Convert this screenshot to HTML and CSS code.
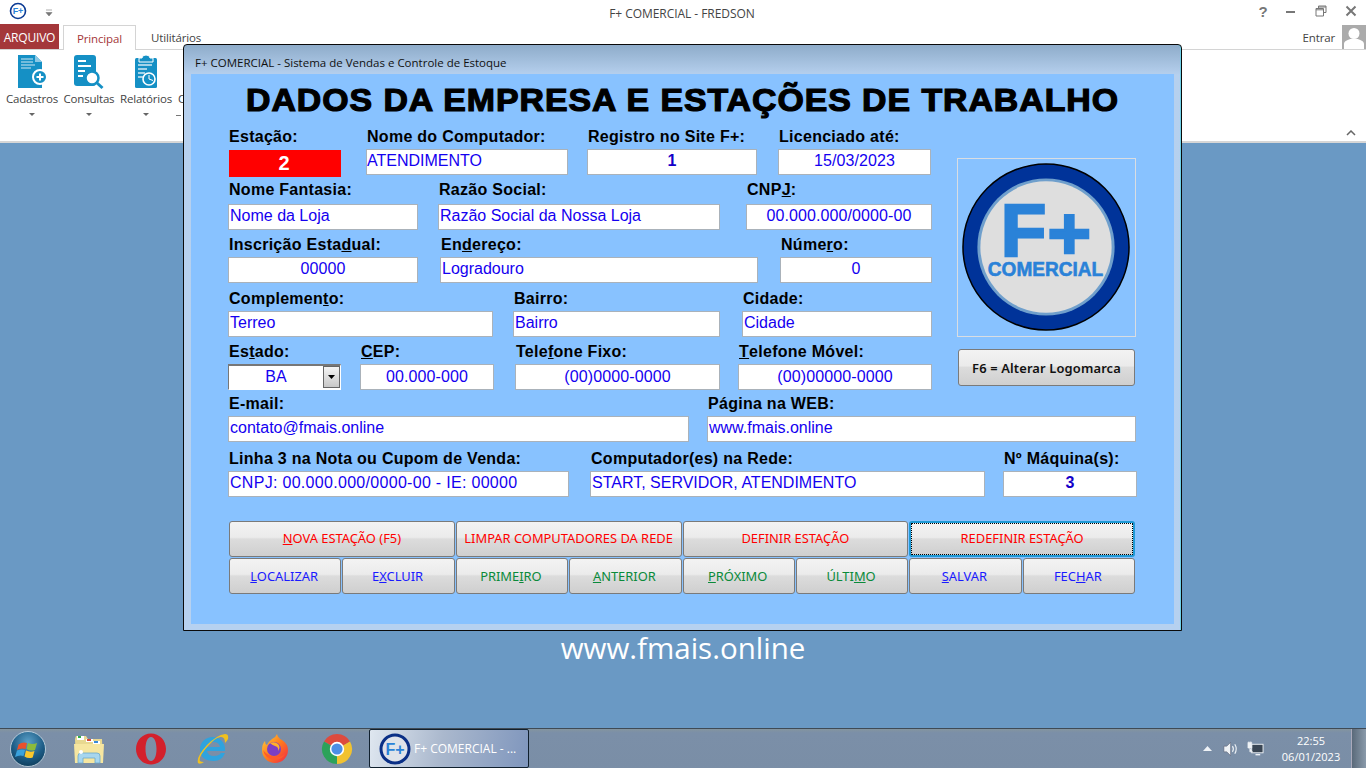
FILE: index.html
```html
<!DOCTYPE html>
<html lang="pt-BR">
<head>
<meta charset="utf-8">
<title>F+ COMERCIAL - FREDSON</title>
<link rel="stylesheet" href="styles.css">
</head>
<body>
<div class="app">
  <header class="titlebar">
    <div class="qat">
      <svg class="qat-logo" viewBox="-9 -9 18 18"><circle r="7.5" fill="#fff" stroke="#0b3a94" stroke-width="1.6"/><text x="0" y="3.4" text-anchor="middle" class="mini-f">F+</text></svg>
      <svg class="qat-arrow" viewBox="0 0 8 8"><path d="M1 1h6M1 3.5h6L4 7z" fill="#777" stroke="#777" stroke-width=".6"/></svg>
    </div>
    <div class="app-title">F+ COMERCIAL - FREDSON</div>
    <div class="winctl">
      <span class="help">?</span>
      <svg viewBox="0 0 12 12"><path d="M1 7h9" stroke="#777" stroke-width="2"/></svg>
      <svg viewBox="0 0 12 12"><path d="M3.5 3V1h7.500v6.500H8.500M1 3.500h7.500V11H1zM1 4.800h7.500M3.500 2h7.500" fill="none" stroke="#777"/></svg>
      <svg viewBox="0 0 12 12"><path d="M1.500 1.500l9 9M10.500 1.500l-9 9" stroke="#777" stroke-width="2"/></svg>
    </div>
  </header>

  <nav class="tabs">
    <div class="tab-file">ARQUIVO</div>
    <div class="tab-active">Principal</div>
    <div class="tab">Utilitários</div>
    <div class="account">
      <span>Entrar</span>
      <svg class="avatar" viewBox="0 0 24 24"><rect width="24" height="24" fill="#ababab"/><circle cx="12" cy="8.500" r="5.500" fill="#fff"/><path d="M2 24v-5c0-3 4-4 6-5h8c2 1 6 2 6 5v5z" fill="#fff"/></svg>
    </div>
  </nav>

  <section class="ribbon">
    <div class="rb-item">
      <svg class="rb-icon" viewBox="2 0 48 36"><path d="M12 0h17l7 7v26H12z" fill="#1590c5"/><path d="M29 0v7h7z" fill="#8cc8e4"/><path d="M15 4h12M15 7h12M15 10h14M15 13h10" stroke="#cfe8f4" stroke-width="1.200"/><circle cx="34" cy="22" r="7" fill="#1590c5" stroke="#fff" stroke-width="2"/><path d="M30.500 22h7M34 18.500v7" stroke="#fff" stroke-width="2"/></svg>
      <span class="rb-label">Cadastros</span><span class="rb-caret"></span>
    </div>
    <div class="rb-item">
      <svg class="rb-icon" viewBox="2 0 48 36"><rect x="11" y="0" width="22" height="31" rx="3" fill="#1590c5"/><path d="M15 6h8M15 11h13M15 16h7M15 21h5" stroke="#fff" stroke-width="2"/><circle cx="29" cy="23" r="6.500" fill="#fff" stroke="#1590c5" stroke-width="2.500"/><path d="M33.500 27.500l6 5.500" stroke="#1590c5" stroke-width="3"/></svg>
      <span class="rb-label">Consultas</span><span class="rb-caret"></span>
    </div>
    <div class="rb-item">
      <svg class="rb-icon" viewBox="0 0 48 36"><rect x="13" y="3" width="22" height="30" rx="1.500" fill="#1590c5"/><path d="M20 3a4 3 0 0 1 8 0h3v4H17V3z" fill="#1590c5" stroke="#fff"/><path d="M16 10h14M16 14h9M16 18h7M16 22h5" stroke="#cfe8f4" stroke-width="1.300"/><circle cx="27" cy="24" r="6" fill="#1590c5" stroke="#fff" stroke-width="1.600"/><path d="M27 20v4l4 1.500" fill="none" stroke="#fff"/></svg>
      <span class="rb-label">Relatórios</span><span class="rb-caret"></span>
    </div>
    <div class="rb-item rb-hidden">
      <span class="rb-label">Caixa</span>
    </div>
    <svg class="rb-collapse" viewBox="0 0 10 6"><path d="M1 5l4-4 4 4" fill="none" stroke="#666" stroke-width="1.500"/></svg>
  </section>

  <main class="desktop">
    <div class="site">www.fmais.online</div>
  </main>

  <footer class="taskbar">
    <svg class="orb" viewBox="-18 -18 36 36">
      <defs>
        <radialGradient id="orbg" cx="50%" cy="30%" r="75%"><stop offset="0" stop-color="#5aa0c8"/><stop offset=".6" stop-color="#1d5c86"/><stop offset="1" stop-color="#0e3a56"/></radialGradient>
      </defs>
      <circle r="17.500" fill="url(#orbg)" stroke="#cfe0ea" stroke-width=".8"/>
      <path d="M-9.500 -4.500q4 -3 8.500 -1.500l-1.500 6q-4 -1.500 -8.500 1z" fill="#e9512b"/>
      <path d="M0 -6q4.500 2 9 0l-2 7q-4.500 1.500 -8.500 -1z" fill="#8cbb3c"/>
      <path d="M-11 1.500q4 -1.500 8 -.5l-1.500 6q-4 -1.500 -8.500 1z" fill="#3aa2dc"/>
      <path d="M-2 1.500q4 2 8.500 .5l-1.800 6.500q-4.500 1.500 -8.200 -1z" fill="#fbc72c"/>
    </svg>
    <svg class="tb-icon" viewBox="0 0 32 32">
      <path d="M2 6l1-3h10l2 3h14l1 24H3z" fill="#e8d890"/>
      <path d="M4 3h7v4H4z" fill="#fff"/><path d="M5 3h3v2H5z" fill="#2fb04a"/><path d="M13 6h7v3h-7z" fill="#fff"/><path d="M14 6h4v2h-4z" fill="#d94a3a"/><path d="M20 8h7v3h-7z" fill="#fff"/><path d="M21 8h4v2h-4z" fill="#3a8ad9"/>
      <path d="M1 11h30l-1 19H2z" fill="#f6e6a0"/>
      <path d="M5 30v-7q0-3 3-3h16q3 0 3 3v7h-5v-5H10v5z" fill="#a7d6ee" stroke="#6aa8cc" stroke-width=".8"/>
      <circle cx="8" cy="19" r="2" fill="#fff"/>
    </svg>
    <svg class="tb-icon" viewBox="0 0 32 32"><path fill-rule="evenodd" d="M16 .5C24.500 .5 31 7.500 31 16s-6.500 15.500-15 15.500S1 24.500 1 16 7.500 .5 16 .5zM16 4c-3.500 0-5.500 5.500-5.500 12S12.500 28 16 28s5.500-5.500 5.500-12S19.500 4 16 4z" fill="#d3202c"/></svg>
    <svg class="tb-icon" viewBox="0 0 32 32"><path d="M3 16a12.500 12 0 0 1 25 0v2H10q1 5 7 5 5 0 7-3h4q-3 8-11 8Q3 28 3 16zm7-2h13q-1-5-6.500-5T10 14z" fill="#2fa3de"/><path d="M1 30q-2-6 9-18Q20 2 28 1q4 0 3 5-1 2-3 4 0-7-5-6-5 1-12 9Q1 24 3 28q1 1 4 1-4 3-6 1z" fill="#f0c020"/></svg>
    <svg class="tb-icon" viewBox="0 0 32 32"><defs><linearGradient id="ffg" x1="0" y1="0" x2="1" y2="1"><stop offset="0" stop-color="#ffd23c"/><stop offset=".5" stop-color="#ff7a1c"/><stop offset="1" stop-color="#f0264a"/></linearGradient></defs><path d="M18 1q1 4 5 6 6 4 6 10a13 13 0 0 1-26 0q0-6 3-9 0 3 2 4 1-3 5-6 4-2 5-5z" fill="url(#ffg)"/><circle cx="15" cy="16" r="7" fill="#7b3fc4"/><path d="M11 10q5-2 8 1 3 3 0 7 1-4-3-5-3-1-5-3z" fill="#ffb02c"/><path d="M4 17q2 9 12 10 7 0 11-7-3 4-9 4-9 0-14-7z" fill="#ff5a2c"/></svg>
    <svg class="tb-icon" viewBox="-16 -16 32 32"><path d="M0 0L-13 -7.500A15 15 0 0 1 13 -7.500z" fill="#dd4b3e"/><path d="M0 0L13 -7.500A15 15 0 0 1 0 15z" fill="#f2c230"/><path d="M0 0L0 15A15 15 0 0 1 -13 -7.500z" fill="#2ca25a"/><circle r="7.200" fill="#fff"/><circle r="5.600" fill="#4d8fe6"/></svg>
    <div class="task">
      <svg class="task-logo" viewBox="-16 -16 32 32"><circle r="14" fill="#dfe3ea" stroke="#0a2f86" stroke-width="3"/><text x="0" y="6" text-anchor="middle" class="task-f">F+</text></svg>
      <span>F+ COMERCIAL - ...</span>
    </div>
    <div class="tray">
      <svg class="tray-up" viewBox="0 0 9 5"><path d="M0 5l4.500-5L9 5z" fill="#eef2f6"/></svg>
      <svg class="tray-ic" viewBox="0 0 18 16"><path d="M1 5h3l4-4v14l-4-4H1z" fill="#eef2f6" stroke="#556" stroke-width=".5"/><path d="M10 5q2 3 0 6M12.500 3q3 5 0 10" fill="none" stroke="#eef2f6" stroke-width="1.200"/></svg>
      <svg class="tray-ic" viewBox="0 0 18 16"><rect x="5" y="3" width="12" height="9" fill="#3a4654" stroke="#eef2f6"/><path d="M9 14h5" stroke="#eef2f6" stroke-width="1.500"/><path d="M1 1h4v6H1zM2 0v2M4 0v2M3 7v4h3" fill="#eef2f6" stroke="#eef2f6" stroke-width=".7"/></svg>
      <div class="clock"><span>22:55</span><span>06/01/2023</span></div>
    </div>
    <div class="show-desktop"></div>
  </footer>

  <div class="dialog">
    <div class="dlg-title">F+ COMERCIAL - Sistema de Vendas e Controle de Estoque</div>
    <form class="client">
      <h1 class="heading">DADOS DA EMPRESA E ESTAÇÕES DE TRABALHO</h1>
      <div class="upper">
        <div class="fields">
          <div class="row r1">
            <div class="w113"><label>Estação:</label><div class="station">2</div></div>
            <div class="w202 ml25"><label>Nome do Computador:</label><div class="input flush">ATENDIMENTO</div></div>
            <div class="w170 ml19"><label>Registro no Site F+:</label><div class="input strong">1</div></div>
            <div class="w153 ml21"><label>Licenciado até:</label><div class="input center">15/03/2023</div></div>
          </div>
          <div class="row r2">
            <div class="w190"><label>Nome Fantasia:</label><div class="input">Nome da Loja</div></div>
            <div class="w282 ml20"><label>Razão Social:</label><div class="input">Razão Social da Nossa Loja</div></div>
            <div class="w186 ml26"><label>CNP<u>J</u>:</label><div class="input center">00.000.000/0000-00</div></div>
          </div>
          <div class="row r3">
            <div class="w190"><label>Inscrição Esta<u>d</u>ual:</label><div class="input center">00000</div></div>
            <div class="w318 ml22"><label>En<u>d</u>ereço:</label><div class="input">Logradouro</div></div>
            <div class="w152 ml22"><label>Núme<u>r</u>o:</label><div class="input center">0</div></div>
          </div>
          <div class="row r4">
            <div class="w265"><label>Complemen<u>t</u>o:</label><div class="input">Terreo</div></div>
            <div class="w207 ml20"><label>Bairro:</label><div class="input">Bairro</div></div>
            <div class="w190 ml22"><label>Cidade:</label><div class="input">Cidade</div></div>
          </div>
          <div class="row r5">
            <div class="w113"><label>Es<u>t</u>ado:</label>
              <div class="combo"><span>BA</span><span class="drop"><svg viewBox="0 0 7 4"><path d="M0 0h7L3.500 4z" fill="#000"/></svg></span></div>
            </div>
            <div class="w134 ml19"><label><u>C</u>EP:</label><div class="input center">00.000-000</div></div>
            <div class="w205 ml21"><label>Tele<u>f</u>one Fixo:</label><div class="input center">(00)0000-0000</div></div>
            <div class="w194 ml18"><label><u>T</u>elefone Móvel:</label><div class="input center">(00)00000-0000</div></div>
          </div>
        </div>
        <aside class="logo-col">
          <div class="logo-box">
            <svg viewBox="0 0 178 178">
              <circle cx="88.500" cy="88.500" r="83.500" fill="#003399" stroke="#000" stroke-width="1.500"/>
              <circle cx="88.500" cy="88.500" r="69" fill="#6f9fcc"/>
              <circle cx="88.500" cy="88.500" r="66" fill="#dedede"/>
              <text x="43" y="98" class="logo-f">F</text>
              <text x="90" y="101" class="logo-plus">+</text>
              <text x="30" y="118" class="logo-c" textLength="116" lengthAdjust="spacingAndGlyphs">COMERCIAL</text>
            </svg>
          </div>
          <button type="button" class="btn logo-btn">F6 = Alterar Logomarca</button>
        </aside>
      </div>
      <div class="row r6">
        <div class="w461"><label>E-mail:</label><div class="input">contato@fmais.online</div></div>
        <div class="w429 ml18"><label>Página na WEB:</label><div class="input">www.fmais.online</div></div>
      </div>
      <div class="row r7">
        <div class="w341"><label>Linha 3 na Nota ou Cupom de Venda:</label><div class="input spaced">CNPJ: 00.000.000/0000-00 - IE: 00000</div></div>
        <div class="w395 ml21"><label>Computador(es) na Rede:</label><div class="input">START, SERVIDOR, ATENDIMENTO</div></div>
        <div class="w134 ml18"><label>Nº Máquina(s):</label><div class="input strong">3</div></div>
      </div>
      <div class="actions">
        <button type="button" class="btn wide red"><u>N</u>OVA ESTAÇÃO (F5)</button>
        <button type="button" class="btn wide red">LIMPAR COMPUTADORES DA REDE</button>
        <button type="button" class="btn wide red">DEFINIR ESTAÇÃO</button>
        <button type="button" class="btn wide red focused">REDEFINIR ESTAÇÃO</button>
        <button type="button" class="btn small blue"><u>L</u>OCALIZAR</button>
        <button type="button" class="btn small blue">E<u>X</u>CLUIR</button>
        <button type="button" class="btn small green">PRIME<u>I</u>RO</button>
        <button type="button" class="btn small green"><u>A</u>NTERIOR</button>
        <button type="button" class="btn small green"><u>P</u>RÓXIMO</button>
        <button type="button" class="btn small green">ÚLTI<u>M</u>O</button>
        <button type="button" class="btn small blue"><u>S</u>ALVAR</button>
        <button type="button" class="btn small blue">FEC<u>H</u>AR</button>
      </div>
    </form>
  </div>
</div>
</body>
</html>
```

FILE: styles.css
```css
* { box-sizing: border-box; }
html, body { margin: 0; padding: 0; }
body { width: 1366px; height: 768px; overflow: hidden; font-family: "Open Sans", "Noto Sans", sans-serif; }
.app { position: relative; width: 1366px; height: 768px; display: flex; flex-direction: column; background: #fff; }

/* title bar */
.titlebar { height: 25px; flex: none; display: flex; align-items: center; background: #fff; }
.qat { flex: 1; display: flex; align-items: center; padding-left: 9px; gap: 18px; }
.qat-logo { width: 18px; height: 18px; margin-top: -3px; }
.mini-f { font: bold 9px "Liberation Sans", sans-serif; fill: #2a82d8; }
.qat-arrow { width: 8px; height: 8px; }
.app-title { font-size: 12px; color: #444; margin: 1px 2px 0 0; letter-spacing: -.05px; }
.winctl { flex: 1; display: flex; justify-content: flex-end; align-items: center; gap: 18px; padding-right: 9px; margin-top: -3px; }
.winctl svg { width: 12px; height: 12px; }
.help { font: bold 15px "Liberation Sans", sans-serif; color: #777; width: 12px; margin-right: -2px; text-align: center; }

/* tabs */
.tabs { height: 25px; flex: none; display: flex; align-items: flex-end; border-bottom: 1px solid #d4d4d4; font-size: 11.500px; letter-spacing: -.15px; }
.tab-file { width: 59px; height: 25px; background: #a4373a; color: #fff; display: flex; align-items: center; justify-content: center; font-size: 12px; letter-spacing: -.2px; padding-top: 1px; }
.tab-active { width: 73px; height: 25px; margin-left: 4px; margin-bottom: -1px; border: 1px solid #d4d4d4; border-bottom: 0; background: #fff; color: #a4373a; display: flex; align-items: center; justify-content: center; }
.tab { margin-left: 15px; height: 24px; display: flex; align-items: center; color: #444; }
.account { margin-left: auto; display: flex; align-items: center; gap: 7px; height: 24px; color: #444; }
.avatar { width: 24px; height: 24px; display: block; }

/* ribbon */
.ribbon { height: 93px; flex: none; display: flex; padding: 5px 0 0 6px; gap: 5px; background: #fff; border-bottom: 2px solid #d6d6d6; position: relative; }
.rb-item { width: 52px; display: flex; flex-direction: column; align-items: center; font-size: 11.500px; letter-spacing: -.2px; color: #444; }
.rb-icon { width: 48px; height: 36px; display: block; }
.rb-label { white-space: nowrap; line-height: 16px; }
.rb-caret { margin-top: 6px; width: 0; height: 0; border: 3px solid transparent; border-top: 3px solid #666; border-bottom: 0; border-left-width: 3.5px; border-right-width: 3.5px; }
.rb-hidden { padding-top: 36px; margin-left: -1px; align-items: flex-start; padding-left: 2px; }
.rb-hidden::after { content: ""; display: block; width: 5px; height: 1px; margin: 8px 0 0 -2px; background: #777; }
.rb-collapse { width: 10px; height: 6px; position: absolute; right: 10px; bottom: 5px; }

/* desktop */
.desktop { flex: 1; background: #6a99c4; display: flex; align-items: flex-end; justify-content: center; padding-bottom: 61px; }
.site { color: #fff; font-size: 29.500px; line-height: 38px; }

/* taskbar */
.taskbar { height: 40px; flex: none; display: flex; align-items: center; background: linear-gradient(#84959f 0, #7b8fa8 10%, #7a8ea6 100%); border-top: 1px solid #3f4a55; color: #fff; }
.orb { width: 36px; height: 36px; margin-left: 10px; flex: none; }
.tb-icon { width: 32px; height: 32px; margin-left: 30px; flex: none; }
.orb + .tb-icon { margin-left: 27px; }
.task { margin-left: 16px; width: 160px; height: 39px; display: flex; align-items: center; gap: 3px; padding-left: 9px; border: 1px solid #10202e; border-radius: 2px; background: linear-gradient(100deg, #dfe7f0 0, #aab8cd 45%, #7f96bd 100%); font-size: 12px; color: #fff; white-space: nowrap; flex: none; }
.task-logo { width: 32px; height: 32px; flex: none; }
.task-f { font: bold 16px "Liberation Sans", sans-serif; fill: #2a82d8; }
.tray { margin-left: auto; display: flex; align-items: center; }
.tray-up { width: 9px; height: 5px; margin-right: 11px; }
.tray-ic { width: 17px; height: 16px; margin-right: 7px; }
.clock { width: 80px; display: flex; flex-direction: column; align-items: center; font-size: 11px; line-height: 16px; }
.show-desktop { width: 15px; height: 39px; background: linear-gradient(90deg, #5a6a7a, #8a9aaa); border-left: 1px solid #aab; }

/* dialog window */
.dialog { position: absolute; left: 183px; top: 44px; width: 999px; height: 587px; padding: 0 7px 6px 7px; border: 1px solid #0a0a0a; border-radius: 4px 4px 0 0; background: linear-gradient(#8eacca 0, #b6d0ee 30px, #b6d1f0 100%); display: flex; flex-direction: column; box-shadow: inset -1px 0 0 #6fd0e8; }
.dlg-title { height: 29px; flex: none; font-size: 11.500px; color: #111; padding: 10px 0 0 4px; line-height: 15px; white-space: nowrap; }
.client { flex: 1; background: #88c2ff; padding: 0 37px; min-height: 0; }
.heading { margin: 8px 0 0; font: bold 32px/36px "Liberation Sans", sans-serif; text-align: center; color: #000; -webkit-text-stroke: 1.2px #000; letter-spacing: .9px; white-space: nowrap; transform: scaleX(1.058); }

/* form */
.upper { display: flex; margin-top: 7px; }
.fields { width: 704px; flex: none; }
.logo-col { margin-left: 25px; margin-top: 33px; width: 179px; flex: none; }
.logo-box { width: 179px; height: 179px; border: 1px solid #d9dde2; }
.logo-box svg { display: block; width: 177px; height: 177px; }
.logo-f { font: bold 75px "Liberation Sans", sans-serif; fill: #2a82d8; stroke: #2a82d8; stroke-width: 2.5px; }
.logo-plus { font: bold 75px "Liberation Sans", sans-serif; fill: #2a82d8; stroke: #2a82d8; stroke-width: 2.5px; }
.logo-c { font: bold 20px "Liberation Sans", sans-serif; fill: #2a82d8; stroke: #2a82d8; stroke-width: .6px; }
.logo-btn { display: block; width: 177px; height: 37px; margin: 12px 0 0 1px; padding-bottom: 5px; font-size: 12px; letter-spacing: .15px; font-weight: 600; color: #111; }

.row { display: flex; align-items: flex-start; }
.row label { display: flex; align-items: center; height: 24px; padding-left: 1px; white-space: pre; font: bold 16px "Liberation Sans", sans-serif; letter-spacing: .28px; color: #000; }
.row label u { text-underline-offset: 1px; }
.r1 { height: 50px; }
.r2 { margin-top: 1px; }
.r2 label { height: 28px; }
.r3 { margin-top: 3px; }
.r4 { margin-top: 4px; }
.r5 { margin-top: 1px; }
.r5 label, .r6 label, .r7 label { height: 26px; padding-top: 2px; }
.r5 .input { line-height: 24px; }
.r6 { margin-top: 0; }
.r7 { margin-top: 3px; }

.input { height: 26px; border: 1px solid #aab2ba; background: #fff; color: #1400f0; font: 16px/22px "Liberation Sans", sans-serif; padding: 0 1px; white-space: nowrap; overflow: hidden; }
.flush { padding-left: 0; }
.spaced { letter-spacing: .3px; }
.center { text-align: center; letter-spacing: .1px; }
.strong { text-align: center; font-weight: bold; color: #1400c8; }
.station { height: 27px; margin: 1px 0 0 1px; padding-right: 2px; background: #ff0000; color: #fff; text-align: center; font: bold 20px/27px "Liberation Sans", sans-serif; }
.combo { height: 26px; display: flex; justify-content: space-between; background: #fff; border: 1px solid #fff; border-top: 2px solid #777; border-left: 1px solid #777; color: #1400f0; font: 16px/22px "Liberation Sans", sans-serif; }
.combo span:first-child { flex: 1; text-align: center; }
.drop { width: 17px; height: 22px; margin-top: 0; border: 1px solid #666; background: linear-gradient(#f4f4f4, #c8c8c8); display: flex; align-items: center; justify-content: center; }
.drop svg { width: 7px; height: 4px; }

.w113 { width: 113px; } .w134 { width: 134px; } .w152 { width: 152px; } .w153 { width: 153px; }
.w170 { width: 170px; } .w186 { width: 186px; } .w190 { width: 190px; } .w194 { width: 194px; } .w202 { width: 202px; }
.w205 { width: 205px; } .w207 { width: 207px; } .w265 { width: 265px; } .w282 { width: 282px; } .w318 { width: 318px; }
.w341 { width: 341px; } .w395 { width: 395px; } .w429 { width: 429px; } .w461 { width: 461px; }
.ml18 { margin-left: 18px; } .ml19 { margin-left: 19px; } .ml20 { margin-left: 20px; } .ml21 { margin-left: 21px; }
.ml22 { margin-left: 22px; } .ml25 { margin-left: 25px; } .ml26 { margin-left: 26px; }

/* buttons */
.btn { border: 1px solid #7a7a7a; border-radius: 3px; background: linear-gradient(#f3f3f3 0, #ebebeb 45%, #dcdcdc 50%, #cfcfcf 100%); font-family: "Noto Sans", "Open Sans", sans-serif; font-size: 12.900px; padding: 0; white-space: nowrap; }
.actions { display: grid; grid-template-columns: repeat(8, 1fr); gap: 1px; width: 906px; margin: 24px 0 0 1px; }
.actions .btn { height: 36px; }
.wide { grid-column: span 2; padding-bottom: 2px; }
.small { padding-right: 2px; }
.red { color: #ff0000; }
.blue { color: #1a1aff; }
.green { color: #0a8a3a; }
.focused { border: 2px solid #1f9ad6; outline: 1px dotted #000; outline-offset: -3px; }
```
